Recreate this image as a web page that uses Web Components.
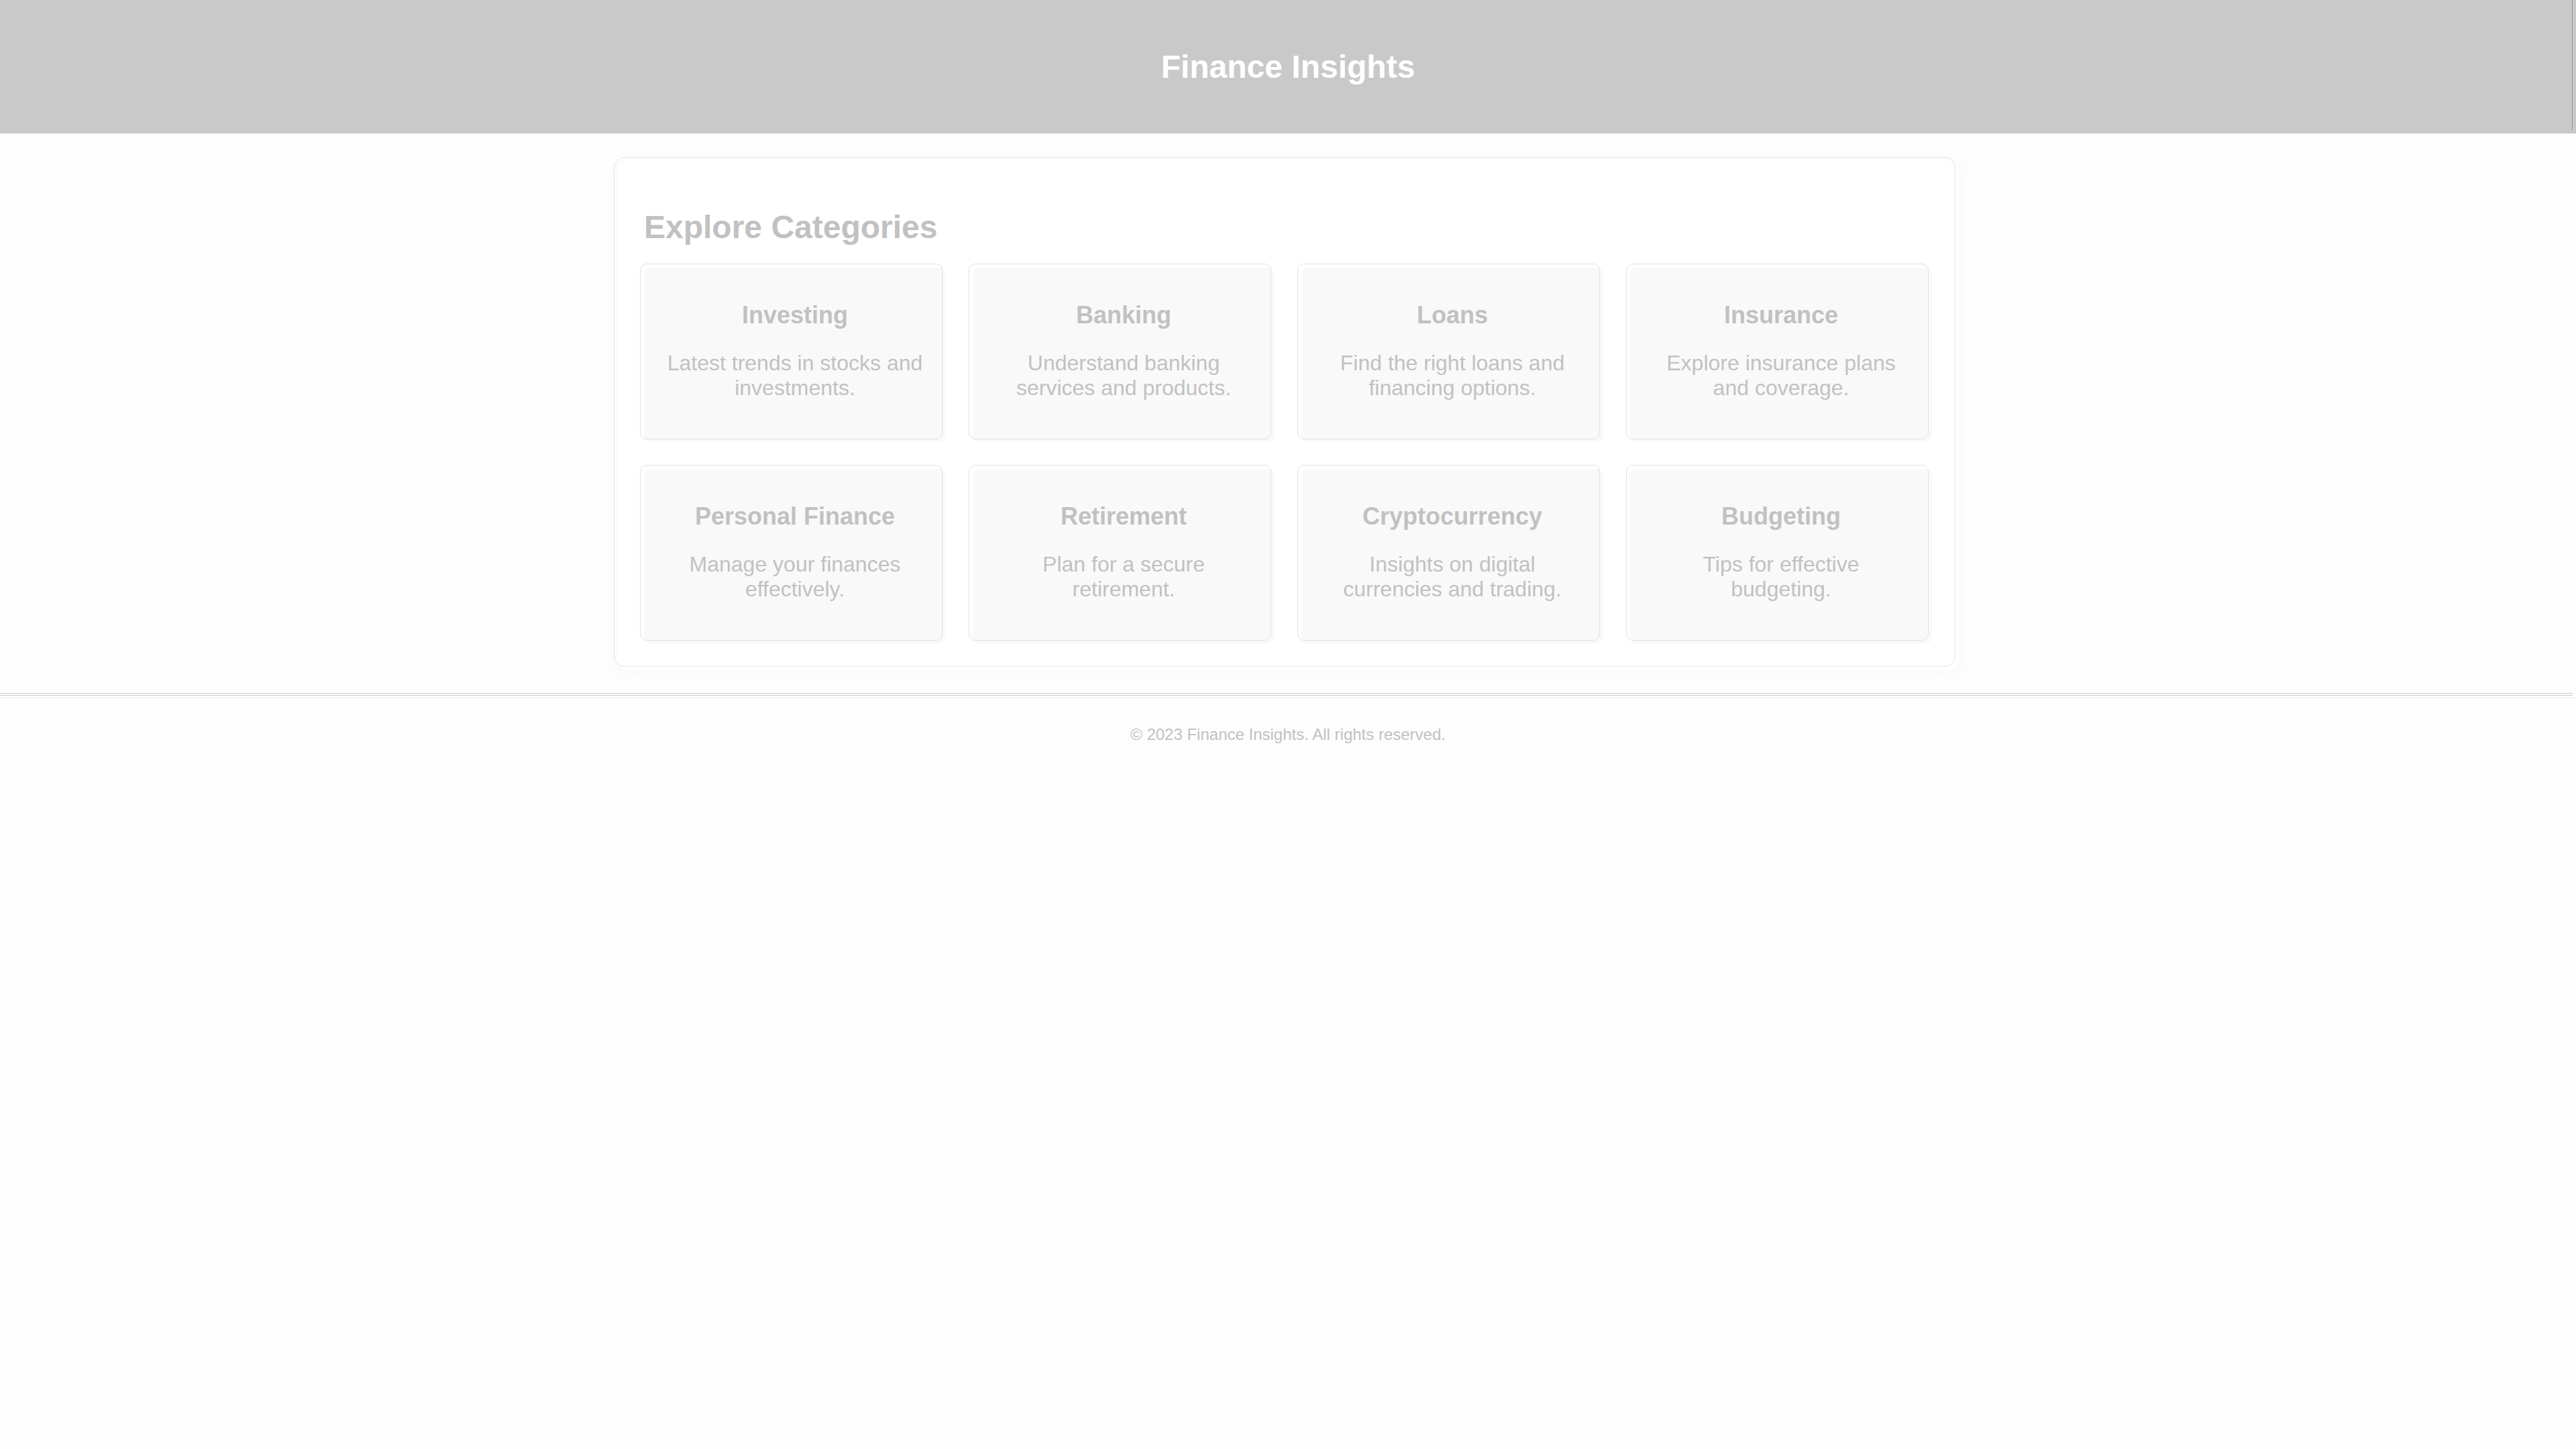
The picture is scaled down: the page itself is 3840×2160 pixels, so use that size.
<!DOCTYPE html>
<html lang="en">
<head>
<meta charset="UTF-8">
<meta name="viewport" content="width=device-width, initial-scale=1">
<title>Finance Insights</title>
<style>
  body {
    margin: 0;
    background: #fdfdfd;
    color: #c1c1c1;
    font-family: "Liberation Sans", Arial, sans-serif;
    font-size: 32px;
    --line: #e0e0e0;
  }
</style>
</head>
<body>
<finance-page></finance-page>

<script>
const define = (name, html) => {
  const template = document.createElement('template');
  template.innerHTML = html;
  customElements.define(name, class extends HTMLElement {
    constructor() {
      super();
      this.attachShadow({ mode: 'open' }).append(template.content.cloneNode(true));
    }
  });
};

define('site-header', `
  <style>
    :host { display: block; }
    header { position: relative; padding: 72px 40px; background: #c9c9c9; color: #fff; text-align: center; }
    header::after { content: ""; position: absolute; inset: 0 5px 5px auto; width: 1px; background: #969696; }
    h1 { margin: 0; font-size: 48px; line-height: 55px; }
  </style>
  <header><h1><slot></slot></h1></header>`);

define('category-card', `
  <style>
    :host { display: block; }
    article { position: relative; box-sizing: border-box; height: 100%; padding: 30px; border-radius: 10px; background: #f9f9f9; text-align: center; }
    /* offset hairline frame */
    article::before { content: ""; position: absolute; inset: -6px 5px 4px -6px; border: 1px solid var(--line); border-radius: 10px; }
    h3 { margin: 20px 0 32px; font-size: 36px; line-height: 42px; }
    p { margin: 0 0 32px; line-height: 37px; }
  </style>
  <article><h3><slot name="title"></slot></h3><p><slot></slot></p></article>`);

define('category-panel', `
  <style>
    :host { display: block; padding: 40px; }
    section { position: relative; box-sizing: border-box; max-width: 2000px; margin: 0 auto; padding: 40px; border-radius: 16px; background: #fff; box-shadow: 0 4px 20px rgba(0, 0, 0, .025); }
    /* offset hairline frame */
    section::before { content: ""; position: absolute; inset: -5px 5px 5px -5px; border: 1px solid #e4e4e4; border-radius: 16px; pointer-events: none; }
    h2 { margin: 32px 0; font-size: 48px; line-height: 56px; }
    .grid { display: grid; grid-template-columns: repeat(auto-fit, minmax(400px, 1fr)); gap: 40px; }
  </style>
  <section><h2><slot name="title"></slot></h2><div class="grid"><slot></slot></div></section>`);

define('site-footer', `
  <style>
    :host { display: block; }
    footer { position: relative; padding: 40px; border-top: 2px solid #f3f3f3; text-align: center; font-size: 24px; line-height: 27px; }
    /* double rule above the footer edge */
    footer::before { content: ""; position: absolute; inset: -8px 5px auto 0; height: 2px; border: solid #cacaca; border-width: 1px 0; }
  </style>
  <footer><slot></slot></footer>`);

define('finance-page', `
  <style>:host { display: block; }</style>
  <site-header>Finance Insights</site-header>
  <main>
    <category-panel>
      <span slot="title">Explore Categories</span>
      <category-card><span slot="title">Investing</span>Latest trends in stocks and investments.</category-card>
      <category-card><span slot="title">Banking</span>Understand banking services and products.</category-card>
      <category-card><span slot="title">Loans</span>Find the right loans and financing options.</category-card>
      <category-card><span slot="title">Insurance</span>Explore insurance plans and coverage.</category-card>
      <category-card><span slot="title">Personal Finance</span>Manage your finances effectively.</category-card>
      <category-card><span slot="title">Retirement</span>Plan for a secure retirement.</category-card>
      <category-card><span slot="title">Cryptocurrency</span>Insights on digital currencies and trading.</category-card>
      <category-card><span slot="title">Budgeting</span>Tips for effective budgeting.</category-card>
    </category-panel>
  </main>
  <site-footer>© 2023 Finance Insights. All rights reserved.</site-footer>`);
</script>
</body>
</html>
